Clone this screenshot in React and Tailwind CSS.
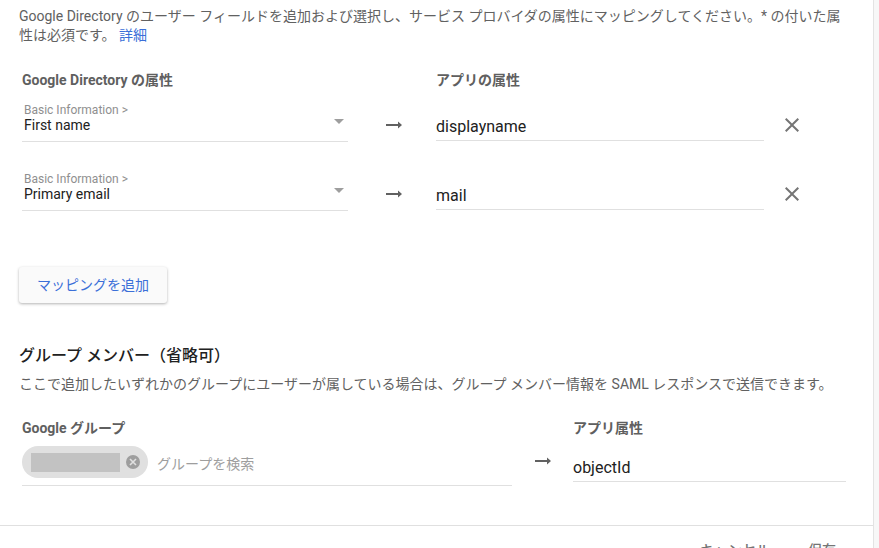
import React from "react";

const font = { fontFamily: 'Roboto, "Noto Sans CJK JP", sans-serif' };

function Arrow() {
  return (
    <svg width="16" height="10" viewBox="0 0 16 10" className="block">
      <path d="M0 4h12V1.5L16 5l-4 3.5V6H0z" fill="#616161" />
    </svg>
  );
}

function CloseIcon() {
  return (
    <svg width="24" height="24" viewBox="0 0 24 24" className="block">
      <path
        d="M19 6.41L17.59 5 12 10.59 6.41 5 5 6.41 10.59 12 5 17.59 6.41 19 12 13.41 17.59 19 19 17.59 13.41 12z"
        fill="#757575"
      />
    </svg>
  );
}

function Triangle() {
  return (
    <svg width="10" height="5" viewBox="0 0 10 5" className="block">
      <path d="M0 0l5 5 5-5z" fill="#9e9e9e" />
    </svg>
  );
}

function MappingRow({ field, value }) {
  return (
    <div className="flex items-end">
      <div className="w-[326px] flex border-b border-[#e0e0e0] pb-[7px] pl-[2px]">
        <div className="flex-1 flex flex-col">
          <div className="text-[12px] leading-[14px] text-[#8f8f8f]">Basic Information &gt;</div>
          <div className="text-[14px] leading-[17px] text-[#212121]">{field}</div>
        </div>
        <div className="pt-[16px] pr-[4px]">
          <Triangle />
        </div>
      </div>
      <div className="w-[88px] h-[34px] flex items-center justify-center pl-[4px]">
        <Arrow />
      </div>
      <div className="w-[328px] border-b border-[#e0e0e0] pb-[4px] mb-[1px]">
        <div className="text-[16px] leading-[19px] text-[#212121]">{value}</div>
      </div>
      <div className="w-[40px] h-[34px] flex items-center justify-center ml-[8px]">
        <CloseIcon />
      </div>
    </div>
  );
}

export default function App() {
  return (
    <div className="w-[879px] h-[548px] overflow-hidden flex bg-[#f7f7f7]" style={font}>
      <div className="w-[874px] h-full bg-white border-r border-[#e3e3e3] flex flex-col">
        <div className="pl-[19px]">
          <p className="pt-[7px] w-[830px] text-[14px] leading-[19px] text-[#616161]">
            Google Directory のユーザー フィールドを追加および選択し、サービス プロバイダの属性にマッピングしてください。* の付いた属性は必須です。{" "}
            <span className="text-[#3b6fd8]">詳細</span>
          </p>

          <div className="pl-[3px] mt-[25px]">
            <div className="flex text-[14px] leading-[20px] font-bold text-[#5f5f5f]">
              <div className="w-[414px]">Google Directory の属性</div>
              <div>アプリの属性</div>
            </div>
            <div className="mt-[13px] flex flex-col gap-[30px]">
              <MappingRow field="First name" value="displayname" />
              <MappingRow field="Primary email" value="mail" />
            </div>
          </div>

          <button className="mt-[56px] h-[36px] w-[148px] rounded-[3px] bg-[#fafafa] text-[14px] text-[#3b6fd8] shadow-[0_1px_3px_rgba(0,0,0,0.3)]">
            マッピングを追加
          </button>

          <h2 className="mt-[41px] text-[16px] leading-[24px] text-[#212121] font-medium">
            グループ メンバー（省略可）
          </h2>
          <p className="mt-[6px] text-[14px] leading-[20px] text-[#616161]">
            ここで追加したいずれかのグループにユーザーが属している場合は、グループ メンバー情報を SAML レスポンスで送信できます。
          </p>

          <div className="pl-[3px] mt-[24px] flex">
            <div className="w-[490px] flex flex-col">
              <div className="text-[14px] leading-[20px] font-bold text-[#5f5f5f]">Google グループ</div>
              <div className="mt-[8px] flex items-center border-b border-[#e0e0e0] pb-[7px]">
                <div className="h-[32px] w-[126px] rounded-full bg-[#e0e0e0] flex items-center pl-[9px]">
                  <div className="w-[89px] h-[19px] bg-[#c2c2c2]" />
                  <div className="ml-[6px] w-[14px] h-[14px] rounded-full bg-[#9e9e9e] flex items-center justify-center">
                    <svg width="8" height="8" viewBox="0 0 8 8" className="block">
                      <path d="M1 1l6 6M7 1L1 7" stroke="#e0e0e0" strokeWidth="1.6" />
                    </svg>
                  </div>
                </div>
                <span className="ml-[9px] text-[14px] leading-[20px] text-[#9e9e9e] pt-[4px]">グループを検索</span>
              </div>
            </div>
            <div className="w-[61px] flex justify-center pt-[38px]">
              <Arrow />
            </div>
            <div className="w-[273px] flex flex-col">
              <div className="text-[14px] leading-[20px] font-bold text-[#5f5f5f]">アプリ属性</div>
              <div className="mt-[20px] border-b border-[#e0e0e0] pb-[4px]">
                <div className="text-[16px] leading-[19px] text-[#212121]">objectId</div>
              </div>
            </div>
          </div>
        </div>

        <div className="mt-auto h-[23px] border-t border-[#e0e0e0] flex justify-end pr-[37px] gap-[38px] pt-[14px] text-[14px] leading-[20px] font-medium text-[#757575]">
          <span>キャンセル</span>
          <span>保存</span>
        </div>
      </div>
    </div>
  );
}
